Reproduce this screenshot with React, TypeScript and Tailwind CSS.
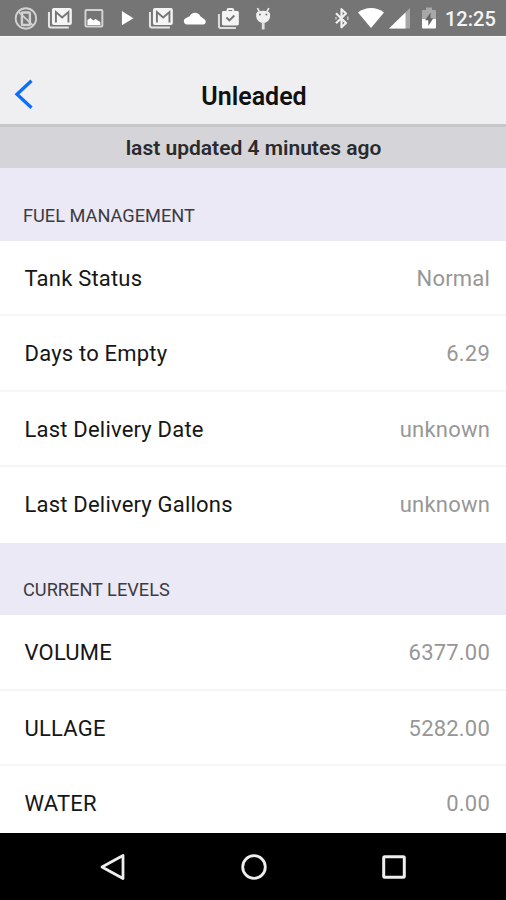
import React from "react";

type Item = {
    label: string;
    value: string;
};

const fuelManagement: Item[] = [
    { label: "Tank Status", value: "Normal" },
    { label: "Days to Empty", value: "6.29" },
    { label: "Last Delivery Date", value: "unknown" },
    { label: "Last Delivery Gallons", value: "unknown" },
];

const currentLevels: Item[] = [
    { label: "VOLUME", value: "6377.00" },
    { label: "ULLAGE", value: "5282.00" },
    { label: "WATER", value: "0.00" },
];

// every notification icon is drawn on a 34x36 slot
const Slot = ({ children }: { children: React.ReactNode }) => (
    <svg className="h-9 w-[33.8px] shrink-0" viewBox="0 0 34 36" fill="none">
        {children}
    </svg>
);

const MailIcon = () => (
    <Slot>
        <path d="M6 12v13.5a2 2 0 0 0 2 2h18" stroke="#e6e6e6" strokeWidth="2" />
        <rect x="9" y="8" width="20" height="17" rx="2" fill="#f4f4f4" />
        <path d="M13 22.5V12l6.3 5.5L25.6 12v10.5" stroke="#757575" strokeWidth="1.9" />
    </Slot>
);

const StatusBar = () => {
    return (
        <div className="flex h-9 shrink-0 items-center bg-[#757575] pl-[9px]">
            <Slot>
                <circle cx="17" cy="18.5" r="10.3" stroke="#d2d2d2" strokeWidth="1.8" />
                <rect x="13" y="12.5" width="8" height="12.5" rx="1" stroke="#d2d2d2" strokeWidth="2.4" />
                <path d="M9.5 11.5l15 14.5" stroke="#d2d2d2" strokeWidth="1.8" />
            </Slot>
            <MailIcon />
            <Slot>
                <rect x="8.5" y="10" width="17" height="16.5" rx="1" stroke="#d2d2d2" strokeWidth="2" />
                <path d="M10.5 25v-5l3-2 3 2.5 2-1.5 5 3v3z" fill="#fff" />
            </Slot>
            <Slot>
                <path d="M12 11l11.5 7.2L12 25.3z" fill="#fff" />
            </Slot>
            <MailIcon />
            <Slot>
                <path d="M8.5 24.5a3.3 3.3 0 0 1-.8-6.2l4-2a5.8 5.8 0 0 1 10.800 0l4.300 3.200a2.800 2.800 0 0 1-1 5z" fill="#fff" />
            </Slot>
            <Slot>
                <path d="M7 14v12.5a1.5 1.5 0 0 0 1.5 1.5H24" stroke="#dedede" strokeWidth="2" />
                <path d="M15.5 12v-1.5a1.5 1.5 0 0 1 1.5-1.5h3a1.5 1.5 0 0 1 1.5 1.5V12" stroke="#f4f4f4" strokeWidth="2" />
                <rect x="10" y="11" width="17" height="14.5" rx="1.5" fill="#f4f4f4" />
                <path d="M14.5 17.5l3 3 5-5" stroke="#757575" strokeWidth="1.9" />
            </Slot>
            <Slot>
                <path d="M11.500 8l2 3.500M23 8l-2 3.500" stroke="#f0f0f0" strokeWidth="1.6" />
                <path d="M10.500 13c2-3 11.500-3 13.500 0 1.200 5-1.200 10-6.700 10S9.300 18 10.500 13z" fill="#f0f0f0" />
                <circle cx="14" cy="14.5" r="1" fill="#757575" />
                <circle cx="20.5" cy="14.5" r="1" fill="#757575" />
                <path d="M17.3 22v7.500" stroke="#e0e0e0" strokeWidth="2.8" />
            </Slot>

            <svg className="ml-auto h-9 w-[16px]" viewBox="0 0 16 36" fill="none">
                <path d="M2 13.3l10 9.7-4.500 4.300V9.200L12 13.500 2 23.200" stroke="#f0f0f0" strokeWidth="2.2" strokeLinejoin="round" />
                <path d="M2 17v2.500M13.800 16.500v3.500" stroke="#c8c8c8" strokeWidth="1.500" />
            </svg>
            <svg className="ml-[8px] h-9 w-[26px]" viewBox="0 0 26 36">
                <path d="M0 12.500C7 6.500 19 6.500 26 12.500L13 28z" fill="#fff" />
            </svg>
            <svg className="ml-[5px] h-9 w-[21px]" viewBox="0 0 21 36">
                <path d="M0 28.500L21 8v20.500z" fill="#a6a6a6" />
                <path d="M0 28.500L16.500 12.500v16z" fill="#fff" />
            </svg>
            <svg className="ml-[12px] h-9 w-[14px]" viewBox="0 0 14 36">
                <path d="M4 7.500h6V10h3a1 1 0 0 1 1 1v8H0v-8a1 1 0 0 1 1-1h3z" fill="#a8a8a8" />
                <path d="M0 19h14v8.500a1 1 0 0 1-1 1H1a1 1 0 0 1-1-1z" fill="#fff" />
                <path d="M8.500 12.500L3 20.300h3.300V26l5-7.800H8.500z" fill="#666" />
            </svg>
            <span className="ml-[9px] mr-[10px] mt-[2px] w-[51px] text-[20px] font-medium leading-none text-[#f5f5f5]">12:25</span>
        </div>
    );
};

const Section = ({ title, items }: { title: string; items: Item[] }) => {
    return (
        <section>
            <h2 className="flex h-[72.5px] items-end bg-[#ebe9f5] pb-[13px] pl-[23px] text-[18.2px] leading-6 text-[#3c3b41]">
                {title}
            </h2>
            <ul>
                {items.map((item) => (
                    <li
                        key={item.label}
                        className="flex h-[75.5px] items-center justify-between border-b-2 border-[#f6f6f6] pl-[24.5px] pr-4 pt-0.5 text-[22px] tracking-[0.2px] last:border-b-0 last:pb-0.5"
                    >
                        <span className="text-[#161616]">{item.label}</span>
                        <span className="text-[#979797]">{item.value}</span>
                    </li>
                ))}
            </ul>
        </section>
    );
};

export default function App() {
    return (
        <div className="flex h-[900px] w-[506px] flex-col overflow-hidden bg-white font-[Roboto,sans-serif]">
            <StatusBar />
            <header className="relative flex h-[88px] shrink-0 items-end justify-center border-t border-[#fafafa] bg-[#efeff1] pb-[11px] pl-0.5">
                <svg className="absolute left-[14px] top-[42px] h-[30px] w-[20px]" viewBox="0 0 20 30" fill="none">
                    <path d="M17.500 1.800L3 15.300l14.500 13.500" stroke="#0a6eff" strokeWidth="3.300" />
                </svg>
                <h1 className="text-[25px] font-semibold leading-8 text-[#111]">Unleaded</h1>
            </header>
            <div className="flex h-11 shrink-0 items-center justify-center border-t-3 border-[#c7c7ca] bg-[#d5d4d9] pl-px pt-0.5 text-[21px] font-semibold text-[#2b2b2d]">
                last updated 4 minutes ago
            </div>
            <main className="min-h-0 flex-1 overflow-hidden">
                <Section title="FUEL MANAGEMENT" items={fuelManagement} />
                <Section title="CURRENT LEVELS" items={currentLevels} />
            </main>
            <nav className="flex h-[67px] shrink-0 items-center justify-center gap-[112.5px] bg-black pl-px">
                <svg className="size-7" viewBox="0 0 28 28" fill="none">
                    <path d="M3 14L24 2.500v23z" stroke="#eee" strokeWidth="2.8" strokeLinejoin="round" />
                </svg>
                <svg className="size-7" viewBox="0 0 28 28" fill="none">
                    <circle cx="14" cy="14" r="11.3" stroke="#eee" strokeWidth="2.8" />
                </svg>
                <svg className="size-7" viewBox="0 0 28 28" fill="none">
                    <rect x="3.7" y="3.7" width="20.6" height="20.6" rx="1" stroke="#eee" strokeWidth="3" />
                </svg>
            </nav>
        </div>
    );
}
